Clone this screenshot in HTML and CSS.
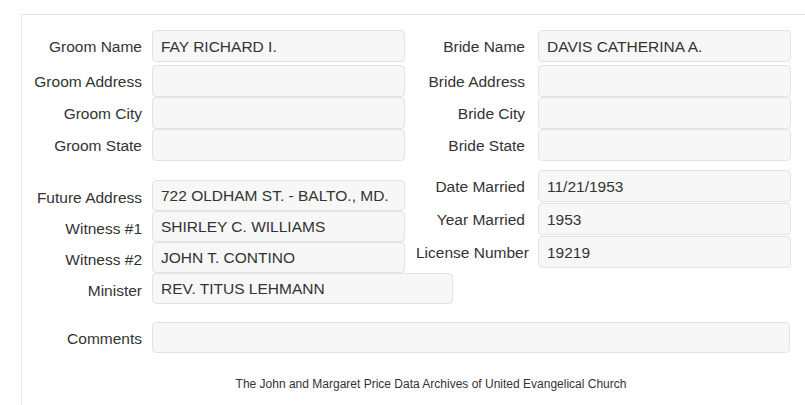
FILE: index.html
```html
<!DOCTYPE html>
<html>
<head>
<meta charset="utf-8">
<link rel="stylesheet" href="styles.css">
</head>
<body>
<div class="panel">
  <div class="section top">
    <div class="col left">
      <div class="field first"><label>Groom Name</label><div class="input">FAY RICHARD I.</div></div>
      <div class="field"><label>Groom Address</label><div class="input"></div></div>
      <div class="field"><label>Groom City</label><div class="input"></div></div>
      <div class="field"><label>Groom State</label><div class="input"></div></div>
    </div>
    <div class="col right">
      <div class="field first"><label>Bride Name</label><div class="input">DAVIS CATHERINA A.</div></div>
      <div class="field"><label>Bride Address</label><div class="input"></div></div>
      <div class="field"><label>Bride City</label><div class="input"></div></div>
      <div class="field"><label>Bride State</label><div class="input"></div></div>
    </div>
  </div>
  <div class="section second">
    <div class="col left lower">
      <div class="field short"><label>Future Address</label><div class="input">722 OLDHAM ST. - BALTO., MD.</div></div>
      <div class="field short"><label>Witness #1</label><div class="input">SHIRLEY C. WILLIAMS</div></div>
      <div class="field short"><label>Witness #2</label><div class="input">JOHN T. CONTINO</div></div>
      <div class="field short"><label>Minister</label><div class="input wide">REV. TITUS LEHMANN</div></div>
    </div>
    <div class="col right spaced">
      <div class="field"><label>Date Married</label><div class="input">11/21/1953</div></div>
      <div class="field"><label>Year Married</label><div class="input">1953</div></div>
      <div class="field"><label>License Number</label><div class="input">19219</div></div>
    </div>
  </div>
  <div class="field comments"><label>Comments</label><div class="input full"></div></div>
  <p class="footer">The John and Margaret Price Data Archives of United Evangelical Church</p>
</div>
</body>
</html>
```

FILE: styles.css
```css
html, body {
  margin: 0;
  padding: 0;
  overflow: hidden;
  background: #ffffff;
}
body {
  font-family: "Liberation Sans", Arial, sans-serif;
  color: #333333;
  width: 805px;
  height: 405px;
}
.panel {
  margin: 14px 0 0 21px;
  width: 818px;
  height: 391px;
  border-top: 1px solid #e6e6e6;
  border-left: 1px solid #e6e6e6;
  padding-top: 15px;
  box-sizing: border-box;
  overflow: hidden;
}
.section {
  display: flex;
}
.col {
  display: flex;
  flex-direction: column;
}
.col.left {
  width: 384px;
  flex: none;
}
.field {
  display: flex;
  align-items: center;
  height: 32px;
  font-size: 15.5px;
}
.field.first {
  margin-bottom: 3px;
}
.field label {
  flex: none;
  box-sizing: border-box;
  text-align: right;
  white-space: nowrap;
  padding-top: 2px;
}
.left .field label,
.comments label {
  width: 130px;
  padding-right: 10px;
}
.right .field label {
  width: 122px;
  margin-left: 10px;
  padding-right: 13px;
}
.input {
  flex: none;
  box-sizing: border-box;
  width: 253px;
  height: 100%;
  background: #f7f7f7;
  border: 1px solid #e3e3e3;
  border-radius: 4px;
  padding: 1px 8px 0 8px;
  display: flex;
  align-items: center;
  white-space: nowrap;
  overflow: hidden;
}
.input.wide {
  width: 301px;
}
.second {
  margin-top: 9px;
}
.lower {
  padding-top: 10px;
}
.field.short {
  height: 31px;
}
.field.short label {
  padding-top: 5px;
}
.spaced {
  gap: 1px;
}
.comments {
  margin-top: 18px;
  height: 31px;
}
.input.full {
  width: 638px;
}
.footer {
  margin: 24px 0 0 0;
  font-size: 12px;
  text-align: center;
  color: #333333;
  width: 818px;
}
```
